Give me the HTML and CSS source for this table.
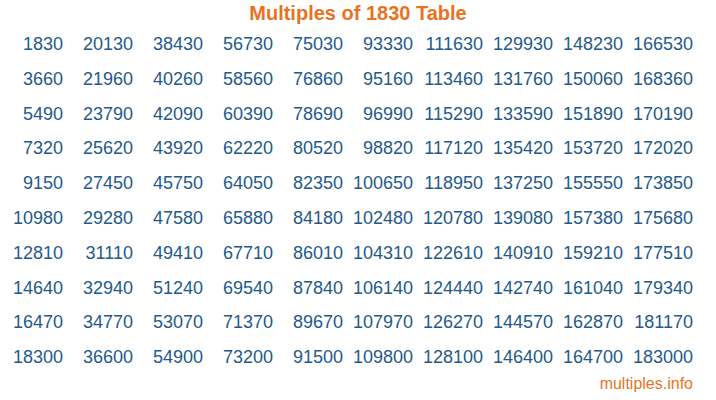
FILE: index.html
```html
<!DOCTYPE html>
<html>
<head>
<meta charset="utf-8">
<link rel="stylesheet" href="styles.css">
</head>
<body>
<div class="page">
  <h1 class="title">Multiples of 1830 Table</h1>
  <div class="grid">
    <div class="cell">1830</div><div class="cell">20130</div><div class="cell">38430</div><div class="cell">56730</div><div class="cell">75030</div><div class="cell">93330</div><div class="cell">111630</div><div class="cell">129930</div><div class="cell">148230</div><div class="cell">166530</div>
    <div class="cell">3660</div><div class="cell">21960</div><div class="cell">40260</div><div class="cell">58560</div><div class="cell">76860</div><div class="cell">95160</div><div class="cell">113460</div><div class="cell">131760</div><div class="cell">150060</div><div class="cell">168360</div>
    <div class="cell">5490</div><div class="cell">23790</div><div class="cell">42090</div><div class="cell">60390</div><div class="cell">78690</div><div class="cell">96990</div><div class="cell">115290</div><div class="cell">133590</div><div class="cell">151890</div><div class="cell">170190</div>
    <div class="cell">7320</div><div class="cell">25620</div><div class="cell">43920</div><div class="cell">62220</div><div class="cell">80520</div><div class="cell">98820</div><div class="cell">117120</div><div class="cell">135420</div><div class="cell">153720</div><div class="cell">172020</div>
    <div class="cell">9150</div><div class="cell">27450</div><div class="cell">45750</div><div class="cell">64050</div><div class="cell">82350</div><div class="cell">100650</div><div class="cell">118950</div><div class="cell">137250</div><div class="cell">155550</div><div class="cell">173850</div>
    <div class="cell">10980</div><div class="cell">29280</div><div class="cell">47580</div><div class="cell">65880</div><div class="cell">84180</div><div class="cell">102480</div><div class="cell">120780</div><div class="cell">139080</div><div class="cell">157380</div><div class="cell">175680</div>
    <div class="cell">12810</div><div class="cell">31110</div><div class="cell">49410</div><div class="cell">67710</div><div class="cell">86010</div><div class="cell">104310</div><div class="cell">122610</div><div class="cell">140910</div><div class="cell">159210</div><div class="cell">177510</div>
    <div class="cell">14640</div><div class="cell">32940</div><div class="cell">51240</div><div class="cell">69540</div><div class="cell">87840</div><div class="cell">106140</div><div class="cell">124440</div><div class="cell">142740</div><div class="cell">161040</div><div class="cell">179340</div>
    <div class="cell">16470</div><div class="cell">34770</div><div class="cell">53070</div><div class="cell">71370</div><div class="cell">89670</div><div class="cell">107970</div><div class="cell">126270</div><div class="cell">144570</div><div class="cell">162870</div><div class="cell">181170</div>
    <div class="cell">18300</div><div class="cell">36600</div><div class="cell">54900</div><div class="cell">73200</div><div class="cell">91500</div><div class="cell">109800</div><div class="cell">128100</div><div class="cell">146400</div><div class="cell">164700</div><div class="cell">183000</div>
  </div>
  <div class="footer">multiples.info</div>
</div>
</body>
</html>
```
FILE: styles.css
```css
html, body {
  margin: 0;
  padding: 0;
  background: #ffffff;
}
.page {
  width: 716px;
  height: 400px;
  font-family: "Liberation Sans", Arial, sans-serif;
}
.title {
  margin: 0;
  height: 27px;
  line-height: 27px;
  font-size: 20px;
  font-weight: bold;
  text-align: center;
  color: #e8731f;
}
.grid {
  display: grid;
  grid-template-columns: repeat(10, 70px);
  grid-auto-rows: 34.8px;
}
.cell {
  text-align: right;
  padding-right: 7px;
  font-size: 18px;
  line-height: 34.8px;
  color: #245a8b;
}
.footer {
  text-align: right;
  padding-right: 23px;
  font-size: 16px;
  line-height: 18px;
  color: #e8731f;
}
```
